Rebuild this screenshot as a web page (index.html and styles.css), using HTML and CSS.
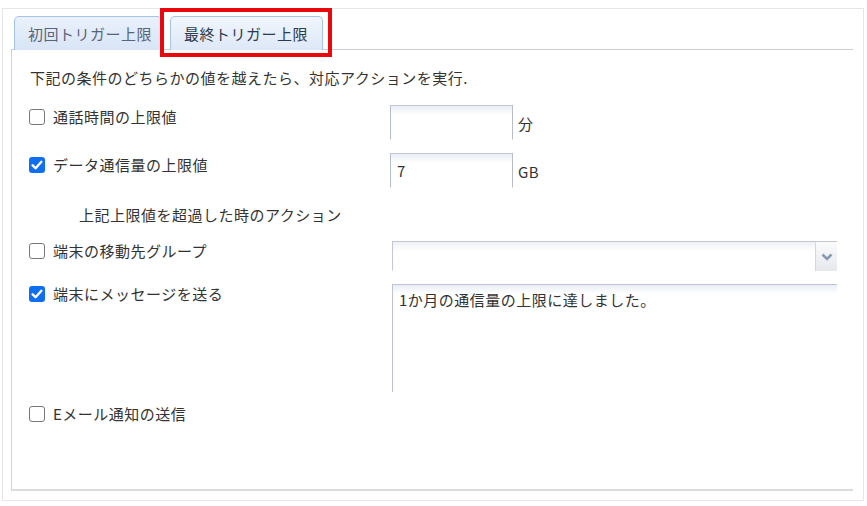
FILE: index.html
```html
<!DOCTYPE html>
<html lang="ja">
<head>
<meta charset="utf-8">
<title>トリガー上限</title>
<link rel="stylesheet" href="styles.css">
</head>
<body>
<div class="frame">
  <div class="tabstrip">
    <div class="tab">初回トリガー上限</div>
    <div class="tab tab-active">最終トリガー上限</div>
    <div class="highlight"></div>
  </div>
  <div class="panel">
    <div class="intro">下記の条件のどちらかの値を越えたら、対応アクションを実行.</div>

    <div class="row row-1">
      <div class="label-col">
        <span class="cb"></span><span class="label">通話時間の上限値</span>
      </div>
      <div class="field">
        <div class="input"></div><span class="unit">分</span>
      </div>
    </div>

    <div class="row row-2">
      <div class="label-col">
        <span class="cb cb-on"><svg viewBox="0 0 16 16" width="16" height="16"><path d="M3.6 8.3 L6.6 11.2 L12.4 4.8" fill="none" stroke="#fff" stroke-width="2.4" stroke-linecap="round" stroke-linejoin="round"/></svg></span><span class="label">データ通信量の上限値</span>
      </div>
      <div class="field">
        <div class="input">7</div><span class="unit">GB</span>
      </div>
    </div>

    <div class="sub">上記上限値を超過した時のアクション</div>

    <div class="row row-4">
      <div class="label-col">
        <span class="cb"></span><span class="label">端末の移動先グループ</span>
      </div>
      <div class="field field-wide">
        <div class="select"><div class="trigger"><svg viewBox="0 0 12 8" width="12" height="8"><path d="M1.5 1.5 L6 6 L10.5 1.5" fill="none" stroke="#8a99b3" stroke-width="2.6" stroke-linejoin="miter"/></svg></div></div>
      </div>
    </div>

    <div class="row row-5">
      <div class="label-col">
        <span class="cb cb-on"><svg viewBox="0 0 16 16" width="16" height="16"><path d="M3.6 8.3 L6.6 11.2 L12.4 4.8" fill="none" stroke="#fff" stroke-width="2.4" stroke-linecap="round" stroke-linejoin="round"/></svg></span><span class="label">端末にメッセージを送る</span>
      </div>
      <div class="field field-wide">
        <div class="textarea">1か月の通信量の上限に達しました。</div>
      </div>
    </div>

    <div class="row row-6">
      <div class="label-col">
        <span class="cb"></span><span class="label">Eメール通知の送信</span>
      </div>
    </div>
  </div>
</div>
</body>
</html>
```
FILE: styles.css
```css
html, body {
  margin: 0;
  padding: 0;
  background: #fff;
}
body {
  font-family: "Noto Sans CJK JP", "Noto Sans", sans-serif;
  font-size: 15px;
  letter-spacing: 0.5px;
  color: #333;
}
.frame {
  margin: 8px 0 0 2px;
  width: 862px;
  height: 493px;
  box-sizing: border-box;
  border: 1px solid #e6e6e6;
  padding: 7px 0 0 8px;
}
.tabstrip {
  position: relative;
  display: flex;
  gap: 8px;
  padding-left: 3px;
  height: 34px;
  width: 842px;
  box-sizing: border-box;
  border-bottom: 1px solid #c9ced6;
}
.tab {
  height: 34px;
  box-sizing: border-box;
  border: 1px solid #a9c3e6;
  border-bottom: none;
  border-radius: 5px 5px 0 0;
  background: linear-gradient(#eaf1fb, #d8e5f6);
  color: #5a6478;
  line-height: 33px;
  padding: 0 0 0 13px;
  width: 148px;
  white-space: nowrap;
}
.tab-active {
  width: 153px;
  color: #2e3a4e;
  background: linear-gradient(#f1f6fd, #dde8f7);
}
.highlight {
  position: absolute;
  left: 149px;
  top: -8px;
  width: 172px;
  height: 49px;
  box-sizing: border-box;
  border: 4px solid #e8080d;
}
.panel {
  width: 842px;
  height: 441px;
  box-sizing: border-box;
  border-left: 1px solid #d3d3d3;
  border-bottom: 2px solid #dcdcdc;
  padding: 18px 0 0 17px;
}
.intro {
  line-height: 20px;
  height: 20px;
  padding-left: 1px;
}
.row {
  display: flex;
}
.label-col {
  width: 361px;
  display: flex;
  align-items: center;
  height: 20px;
  flex: none;
}
.label {
  line-height: 20px;
  margin-left: 8px;
  white-space: nowrap;
}
.cb {
  width: 16px;
  height: 16px;
  box-sizing: border-box;
  border: 1.5px solid #777;
  border-radius: 3px;
  background: #fff;
  flex: none;
  display: flex;
  align-items: center;
  justify-content: center;
}
.cb-on {
  border: none;
  background: #0f6ff0;
}
.cb-on svg {
  display: block;
}
.row-1 {
  margin-top: 17px;
}
.row-1 .label-col, .row-2 .label-col {
  margin-top: 2px;
}
.row-2 {
  margin-top: 13px;
}
.field {
  display: flex;
  align-items: center;
}
.input {
  width: 123px;
  height: 35px;
  box-sizing: border-box;
  border: 1px solid #b8bbcc;
  border-bottom-color: #fff;
  border-top-color: #c4c6d6;
  background: linear-gradient(#e9edf4 0, #fff 9px);
  font-size: 15px;
  line-height: 33px;
  padding-left: 6px;
  color: #333;
}
.unit {
  margin-left: 5px;
  line-height: 20px;
  margin-top: 2px;
}
.sub {
  margin: 17px 0 0 50px;
  line-height: 20px;
  height: 20px;
}
.row-4 {
  margin-top: 16px;
}
.field-wide {
  margin-left: 2px;
  align-items: flex-start;
}
.select {
  width: 445px;
  height: 30px;
  box-sizing: border-box;
  border: 1px solid #c4c6d6;
  border-bottom-color: #fff;
  border-right: none;
  background: linear-gradient(#edf0f5 0, #fff 9px);
  display: flex;
  justify-content: flex-end;
}
.trigger {
  width: 22px;
  height: 29px;
  box-sizing: border-box;
  border-left: 1px solid #d4d6de;
  background: linear-gradient(#fbfbfc, #e6e8ec);
  display: flex;
  align-items: center;
  justify-content: center;
}
.row-5 {
  margin-top: 13px;
}
.textarea {
  width: 445px;
  height: 108px;
  box-sizing: border-box;
  border: 1px solid #c0c2d3;
  border-right: none;
  border-bottom: none;
  background: linear-gradient(#e9edf4 0, #fff 9px);
  padding: 5px 0 0 6px;
  line-height: 20px;
  font-size: 15px;
  color: #333;
}
.row-6 {
  margin-top: 12px;
}
```
